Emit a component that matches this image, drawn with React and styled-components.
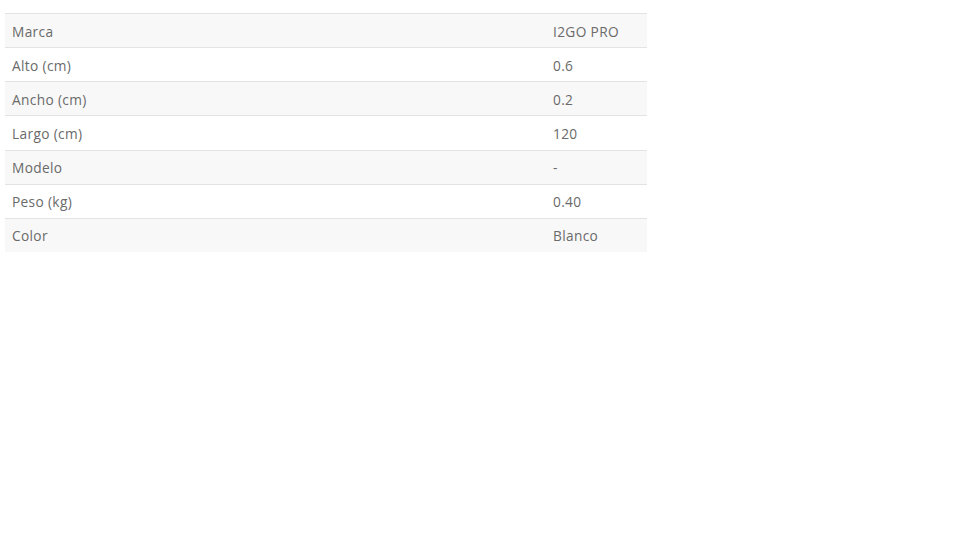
import styled, { createGlobalStyle } from "styled-components";

const GlobalStyle = createGlobalStyle`
  body {
    margin: 0;
    background: #fff;
    font-family: "Open Sans", "Liberation Sans", sans-serif;
  }
`;

const Wrapper = styled.div`
  padding: 13px 0 0 5px;
`;

const SpecTable = styled.div`
  width: 642px;
  display: flex;
  flex-direction: column;
`;

const Row = styled.div`
  display: grid;
  grid-template-columns: 541px 1fr;
  height: 34.15px;
  box-sizing: border-box;
  border-top: 1px solid #e3e3e3;
  background-color: ${(p) => (p.$odd ? "#f8f8f8" : "#fff")};
`;

const Cell = styled.div`
  display: flex;
  align-items: center;
  padding: 1px 7px 0;
  font-size: 13.7px;
  color: #6a6a6a;
  letter-spacing: 0.35px;
`;

const specs = [
  ["Marca", "I2GO PRO"],
  ["Alto (cm)", "0.6"],
  ["Ancho (cm)", "0.2"],
  ["Largo (cm)", "120"],
  ["Modelo", "-"],
  ["Peso (kg)", "0.40"],
  ["Color", "Blanco"],
];

export default function App() {
  return (
    <>
      <GlobalStyle />
      <Wrapper>
        <SpecTable>
          {specs.map(([label, value], index) => (
            <Row key={label} $odd={index % 2 === 0}>
              <Cell>{label}</Cell>
              <Cell>{value}</Cell>
            </Row>
          ))}
        </SpecTable>
      </Wrapper>
    </>
  );
}
